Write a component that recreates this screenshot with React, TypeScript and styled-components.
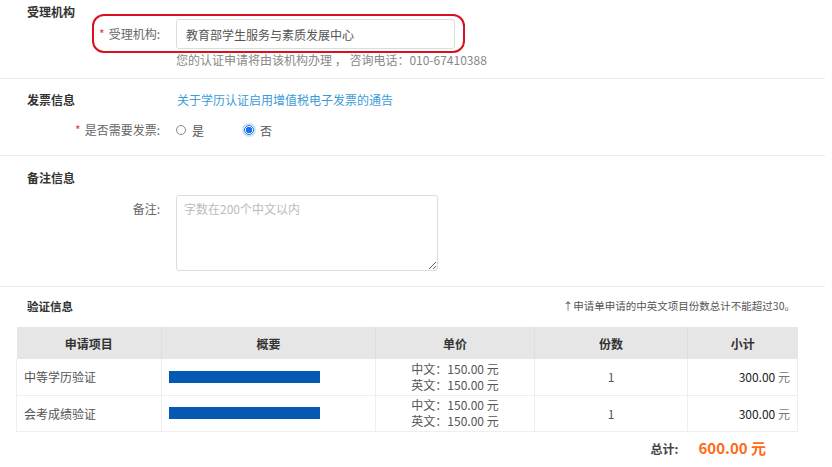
import React from 'react';
import styled, { createGlobalStyle } from 'styled-components';

const GlobalStyle = createGlobalStyle`
  html, body {
    margin: 0;
    padding: 0;
    background: #fff;
  }
  body {
    font-family: "Microsoft YaHei", "Noto Sans CJK SC", "Noto Sans", sans-serif;
    font-size: 12px;
    color: #333;
  }
  * { box-sizing: border-box; }
`;

interface RowI {
  name: string
  cn: string
  en: string
  count: number
  subtotal: string
}

const rows: RowI[] = [
  { name: '中等学历验证', cn: '150.00', en: '150.00', count: 1, subtotal: '300.00' },
  { name: '会考成绩验证', cn: '150.00', en: '150.00', count: 1, subtotal: '300.00' },
];

const columns = ['申请项目', '概要', '单价', '份数', '小计'];

const App: React.FC = () => {
  return (
    <Page>
      <GlobalStyle />

      {/* 受理机构 */}
      <Section padTop={5} padBottom={11}>
        <Title>受理机构</Title>
        <Highlight>
          <Label width={62}><Star>*</Star>受理机构:</Label>
          <Input defaultValue="教育部学生服务与素质发展中心" readOnly />
        </Highlight>
        <Help>您的认证申请将由该机构办理 ， 咨询电话：010-67410388</Help>
      </Section>

      {/* 发票信息 */}
      <Section padTop={14} padBottom={15}>
        <TitleRow>
          <Title>发票信息</Title>
          <NoticeLink href="#">关于学历认证启用增值税电子发票的通告</NoticeLink>
        </TitleRow>
        <FormRow top={13}>
          <Label width={133}><Star>*</Star>是否需要发票:</Label>
          <Radios>
            <RadioItem><Radio /> 是</RadioItem>
            <RadioItem><Radio checked /> 否</RadioItem>
          </Radios>
        </FormRow>
      </Section>

      {/* 备注信息 */}
      <Section padTop={15} padBottom={15}>
        <Title>备注信息</Title>
        <FormRow top={10} alignTop>
          <Label width={133} padTop={6}>备注:</Label>
          <Remark placeholder="字数在200个中文以内" />
        </FormRow>
      </Section>

      {/* 验证信息 */}
      <VerifySection>
        <VerifyHead>
          <SmallTitle>验证信息</SmallTitle>
          <Note>↑申请单申请的中英文项目份数总计不能超过30。</Note>
        </VerifyHead>
        <Table>
          <thead>
            <tr>
              {columns.map(c => <Th key={c}>{c}</Th>)}
            </tr>
          </thead>
          <tbody>
            {rows.map(r => (
              <tr key={r.name}>
                <Td>{r.name}</Td>
                <Td><Redacted /></Td>
                <Td center>
                  <PriceLine>中文：{r.cn} 元</PriceLine>
                  <PriceLine>英文：{r.en} 元</PriceLine>
                </Td>
                <Td center>{r.count}</Td>
                <Td right>{r.subtotal} <Unit>元</Unit></Td>
              </tr>
            ))}
          </tbody>
        </Table>
        <Total>
          <TotalLabel>总计:</TotalLabel>
          <TotalValue>600.00 元</TotalValue>
        </Total>
      </VerifySection>
    </Page>
  );
};

export default App;

const Page = styled.div`
  width: 832px;
  height: 467px;
  overflow: hidden;
  padding-right: 7px;
`;

const Section = styled.div<{ padTop: number; padBottom: number }>`
  padding: ${p => p.padTop}px 0 ${p => p.padBottom}px 27px;
  border-bottom: 1px solid #ececec;
`;

const Title = styled.div`
  font-size: 12px;
  font-weight: bold;
  color: #333;
  line-height: 14px;
  height: 14px;
`;

const TitleRow = styled.div`
  display: flex;
  align-items: center;
  ${Title} {
    width: 150px;
  }
`;

const NoticeLink = styled.a`
  color: #3a9bd9;
  text-decoration: none;
  line-height: 14px;
`;

const Highlight = styled.div`
  display: flex;
  align-items: center;
  gap: 16px;
  width: 373px;
  margin: -5px 0 0 65px;
  padding: 3px 8px 2px 4px;
  border: 2px solid #d9101e;
  border-radius: 12px;
`;

const Label = styled.div<{ width: number; padTop?: number }>`
  width: ${p => p.width}px;
  flex-shrink: 0;
  text-align: right;
  color: #666;
  white-space: nowrap;
  padding-top: ${p => p.padTop || 0}px;
  line-height: 16px;
`;

const Star = styled.span`
  color: #e4393c;
  margin-right: 4px;
`;

const Input = styled.input`
  width: 279px;
  height: 30px;
  border: 1px solid #dcdcdc;
  border-radius: 3px;
  padding: 0 9px;
  font: inherit;
  font-size: 12px;
  color: #555;
  outline: none;
`;

const Help = styled.div`
  margin-left: 149px;
  line-height: 14px;
  color: #888;
`;

const FormRow = styled.div<{ top: number; alignTop?: boolean }>`
  display: flex;
  align-items: ${p => (p.alignTop ? 'flex-start' : 'center')};
  gap: 16px;
  margin-top: ${p => p.top}px;
  min-height: 20px;
`;

const Radios = styled.div`
  display: flex;
  gap: 40px;
`;

const RadioItem = styled.label`
  display: flex;
  align-items: center;
  gap: 6px;
  color: #555;
`;

const Radio = styled.span<{ checked?: boolean }>`
  width: 10px;
  height: 10px;
  border-radius: 50%;
  border: 1px solid ${p => (p.checked ? '#1a73e8' : '#888')};
  background: ${p => (p.checked ? 'radial-gradient(circle, #1a73e8 0 3px, #fff 3.5px)' : '#fff')};
  box-shadow: ${p => (p.checked ? '0 0 0 2px #cfe2fb' : 'none')};
`;

const Remark = styled.textarea`
  width: 262px;
  height: 76px;
  border: 1px solid #dcdcdc;
  border-radius: 3px;
  padding: 5px 7px;
  font: inherit;
  font-size: 12px;
  line-height: 16px;
  color: #555;
  outline: none;
  &::placeholder {
    color: #bbb;
  }
`;

const VerifySection = styled.div`
  padding: 12px 28px 0 16px;
`;

const VerifyHead = styled.div`
  display: flex;
  justify-content: space-between;
  align-items: center;
  padding-left: 11px;
  margin-bottom: 14px;
`;

const SmallTitle = styled.div`
  font-size: 11.5px;
  font-weight: bold;
  color: #333;
  line-height: 14px;
`;

const Note = styled.div`
  font-size: 10.5px;
  color: #555;
  line-height: 14px;
  margin-right: 2px;
`;

const Table = styled.table`
  width: 781px;
  border-collapse: collapse;
  table-layout: fixed;
  th:nth-child(1) { width: 145px; }
  th:nth-child(2) { width: 214px; }
  th:nth-child(3) { width: 159px; }
  th:nth-child(4) { width: 153px; }
  th:nth-child(5) { width: 110px; }
`;

const Th = styled.th`
  height: 32px;
  background: #e6e6e6;
  border-right: 1px solid #dedede;
  font-weight: bold;
  color: #333;
  font-size: 12px;
  &:last-child { border-right: none; }
`;

const Td = styled.td<{ center?: boolean; right?: boolean }>`
  height: 36px;
  padding: 0 7px;
  border: 1px solid #eee;
  border-top: none;
  color: #555;
  text-align: ${p => (p.center ? 'center' : p.right ? 'right' : 'left')};
  vertical-align: middle;
  ${p => p.right && 'color: #222;'}
`;

const PriceLine = styled.div`
  line-height: 16px;
`;

const Unit = styled.span`
  color: #777;
`;

const Redacted = styled.div`
  width: 151px;
  height: 12px;
  background: #0659b2;
`;

const Total = styled.div`
  display: flex;
  justify-content: flex-end;
  align-items: baseline;
  gap: 20px;
  padding: 5px 31px 0 0;
`;

const TotalLabel = styled.span`
  font-weight: bold;
  color: #444;
`;

const TotalValue = styled.span`
  font-size: 15px;
  font-weight: bold;
  color: #ff6a13;
`;
